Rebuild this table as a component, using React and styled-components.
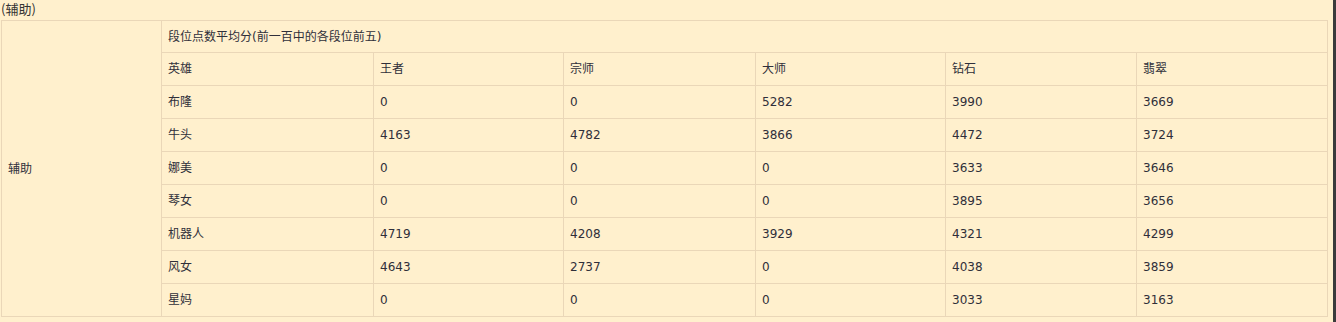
import React from 'react';
import styled, { createGlobalStyle } from 'styled-components';

/* ---------------------------------- Data ---------------------------------- */
const ranks = ['王者', '宗师', '大师', '钻石', '翡翠'];

const heroes = [
	{ name: '布隆', scores: [0, 0, 5282, 3990, 3669] },
	{ name: '牛头', scores: [4163, 4782, 3866, 4472, 3724] },
	{ name: '娜美', scores: [0, 0, 0, 3633, 3646] },
	{ name: '琴女', scores: [0, 0, 0, 3895, 3656] },
	{ name: '机器人', scores: [4719, 4208, 3929, 4321, 4299] },
	{ name: '风女', scores: [4643, 2737, 0, 4038, 3859] },
	{ name: '星妈', scores: [0, 0, 0, 3033, 3163] },
];

const colWidths = [160, 212, 190, 192, 190, 191, 191];

/* ------------------------------ Global Styles ----------------------------- */
const GlobalStyle = createGlobalStyle`
	html, body {
		margin: 0;
		padding: 0;
		background: #fff0cd;
	}
	body {
		font-family: "DejaVu Sans", "Noto Sans CJK SC", sans-serif;
		font-size: 12px;
		color: #333;
	}
`;

const App = () => (
	<>
		<GlobalStyle />
		<Page>
			<Main>
				<Title>(辅助)</Title>
				<Table>
					<colgroup>
						{colWidths.map((w, i) => (
							<col key={i} style={{ width: w }} />
						))}
					</colgroup>
					<tbody>
						<tr>
							<Cell rowSpan={heroes.length + 2}>辅助</Cell>
							<Cell colSpan={6} $head>
								段位点数平均分(前一百中的各段位前五)
							</Cell>
						</tr>
						<tr>
							<Cell>英雄</Cell>
							{ranks.map((r) => (
								<Cell key={r}>{r}</Cell>
							))}
						</tr>
						{heroes.map((h) => (
							<tr key={h.name}>
								<Cell>{h.name}</Cell>
								{h.scores.map((s, i) => (
									<Cell key={i}>{s}</Cell>
								))}
							</tr>
						))}
					</tbody>
				</Table>
			</Main>
			<ScrollEdge />
		</Page>
	</>
);

const Page = styled.div`
	display: flex;
	height: 322px;
`;

const Main = styled.div`
	flex: 1;
	padding-left: 1px;
`;

const ScrollEdge = styled.div`
	width: 3px;
	background: #3b3b3b;
`;

const Title = styled.div`
	height: 20px;
	line-height: 18px;
	font-size: 13px;
	font-family: "Noto Sans CJK SC", sans-serif;
`;

const Table = styled.table`
	width: 1326px;
	table-layout: fixed;
	border-collapse: collapse;
	border: 1px solid #ead7b8;
`;

const Cell = styled.td`
	border: 1px solid #ead7b8;
	padding: 0 6px;
	height: ${(p) => (p.$head ? 31 : 32)}px;
	line-height: 16px;
	vertical-align: middle;
	text-align: left;
	white-space: nowrap;
	color: #2f2f3a;
`;

export default App;
